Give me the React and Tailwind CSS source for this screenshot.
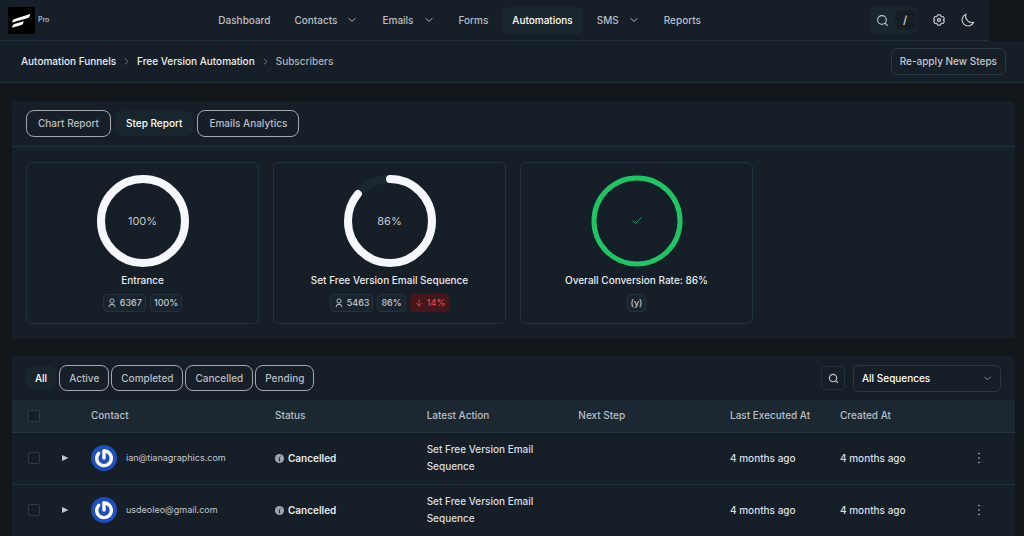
import React, { useState } from 'react';
import { ChevronDown, ChevronRight, Search, Check, ArrowDown } from 'lucide-react';
import { RiUserLine } from 'react-icons/ri';

const navItems = [
  { label: 'Dashboard' },
  { label: 'Contacts', menu: true },
  { label: 'Emails', menu: true },
  { label: 'Forms' },
  { label: 'Automations', active: true },
  { label: 'SMS', menu: true },
  { label: 'Reports' }
];

const subscribers = [
  { email: 'ian@tianagraphics.com', status: 'Cancelled', action: 'Set Free Version Email Sequence', executed: '4 months ago', created: '4 months ago' },
  { email: 'usdeoleo@gmail.com', status: 'Cancelled', action: 'Set Free Version Email Sequence', executed: '4 months ago', created: '4 months ago' }
];

const Logo = () => (
  <svg className="h-[27px] w-[27px]" viewBox="0 0 27 27">
    <rect width="27" height="27" rx="2" fill="#000" />
    <path d="M4.200 15.600c0-2.300 1-3.300 3-3.900L22.200 7c0 2.400-1 3.600-3.100 4.200L4.200 15.600z" fill="#fff" />
    <path d="M4.200 20.700c0-2.300 1-3.300 3-3.900l8.400-2.600c0 2.300-1 3.400-3 4l-8.400 2.500z" fill="#fff" />
  </svg>
);

const GearIcon = () => (
  <svg className="h-3 w-3" viewBox="0 0 24 24" fill="none" stroke="currentColor" strokeWidth="2.200" strokeLinejoin="round">
    <path d="M9 1.800h6l1.500 3.600 3.800-.5 2.500 4.800L20.500 12l2.300 2.300-2.500 4.800-3.800-.5-1.500 3.600H9l-1.500-3.600-3.800.5-2.500-4.800L3.500 12 1.200 9.700l2.500-4.800 3.800.5z" />
    <circle cx="12" cy="12" r="3" strokeWidth="2.600" />
  </svg>
);

const MoonIcon = () => (
  <svg className="h-[14px] w-[14px]" viewBox="0 0 24 24" fill="none" stroke="currentColor" strokeWidth="2" strokeLinejoin="round">
    <path d="M8.500 2A10.500 10.500 0 1 0 22 16 A11 11 0 0 1 8.500 2z" />
  </svg>
);

const Avatar = () => (
  <svg className="h-[26px] w-[26px] shrink-0" viewBox="0 0 26 26">
    <circle cx="13" cy="13" r="13" fill="#1f4fbd" />
    <path d="M13 6a7.300 7.300 0 1 1-5.300 2.300" fill="none" stroke="#fff" strokeWidth="3.400" strokeLinecap="round" />
    <path d="M13 6v7" stroke="#fff" strokeWidth="3.400" strokeLinecap="round" />
  </svg>
);

const InfoIcon = () => (
  <svg className="h-[9px] w-[9px]" viewBox="0 0 18 18">
    <circle cx="9" cy="9" r="9" fill="#a3a8b0" />
    <path d="M10.600 3.500l-.4 1.800M7.200 8h2.300l-1.300 5.700h2.300" fill="none" stroke="#161e27" strokeWidth="2" />
  </svg>
);

const Ring = ({ percent, width, color, radius, children }) => {
  const length = 2 * Math.PI * radius;
  return (
    <div className="relative h-[94px] w-[94px]">
      <svg className="h-full w-full -rotate-90" viewBox="0 0 94 94" fill="none" strokeWidth={width}>
        <circle cx="47" cy="47" r={radius} stroke="#1c2831" />
        <circle cx="47" cy="47" r={radius} stroke={color} strokeLinecap="round" strokeDasharray={`${length * percent / 100} ${length}`} />
      </svg>
      <div className="absolute inset-0 flex items-center justify-center text-[11px] text-[#c3c8ce]">{children}</div>
    </div>
  );
};

const Tag = ({ danger, children }) => (
  <span className={`flex h-[18px] items-center gap-[3px] rounded border px-[3px] text-[9px] font-medium ${danger ? 'border-[#45161c] bg-[#45161c] text-[#e04a55]' : 'border-[#24323d] bg-[#1a242e] text-[#c3c8ce]'}`}>
    {children}
  </span>
);

const StepCard = ({ title, ring, children }) => (
  <div className="flex w-[233px] flex-col items-center rounded-md border border-[#233241] py-[11px]">
    {ring}
    <h3 className="mt-[2px] leading-5 font-medium text-[#e8eaed]">{title}</h3>
    <div className="mt-1 flex gap-1">{children}</div>
  </div>
);

const Tabs = ({ items, active, onChange, className, tabClass }) => (
  <div className={`flex ${className}`}>
    {items.map(item => (
      <button
        key={item}
        onClick={() => onChange(item)}
        className={`rounded-lg border font-medium ${tabClass} ${item === active ? 'border-[#161e27] bg-[#1a262e] text-white' : 'border-[#a3a8b0] text-[#b9bec5]'}`}
      >
        {item}
      </button>
    ))}
  </div>
);

const Checkbox = ({ label }) => (
  <input type="checkbox" aria-label={label} className="block h-3 w-3 appearance-none rounded-xs border border-[#2c3a46] bg-[#151d25] checked:bg-blue-600" />
);

const App = () => {
  const [report, setReport] = useState('Step Report');
  const [status, setStatus] = useState('All');

  return (
    <div className="min-h-screen bg-[#12171c] font-['Inter',sans-serif] text-[10px] text-[#c3c8ce]">
      <header className="mr-[35px] flex h-[41px] items-center justify-between border-b border-[#213040] bg-[#161e27] pr-[14px] pl-2">
        <a href="#home" className="flex items-center gap-[3px] text-[7px] font-medium">
          <Logo />
          Pro
        </a>
        <nav className="flex gap-1 font-medium">
          {navItems.map(item => (
            <a
              key={item.label}
              href={`#${item.label.toLowerCase()}`}
              className={`flex h-[27px] items-center gap-[9px] rounded-md px-[10px] ${item.active ? 'bg-[#1a262e] text-white' : 'text-[#b9bec5]'}`}
            >
              {item.label}
              {item.menu && <ChevronDown size={12} strokeWidth={2} />}
            </a>
          ))}
        </nav>
        <div className="flex items-center gap-4">
          <button aria-label="Search" className="flex h-[26px] items-center gap-[6px] rounded bg-[#1a262e] pr-[2px] pl-[6px]">
            <Search size={13} strokeWidth={2} />
            <kbd className="flex h-[20px] w-[20px] items-center justify-center rounded bg-[#151d25] font-['Inter',sans-serif] text-[11px] font-semibold">/</kbd>
          </button>
          <button aria-label="Settings"><GearIcon /></button>
          <button aria-label="Dark mode"><MoonIcon /></button>
        </div>
      </header>

      <div className="flex h-[42px] items-center justify-between border-b border-[#1f3039] bg-[#161e27] pr-[18px] pl-[21px] font-medium">
        <nav aria-label="Breadcrumb" className="flex items-center gap-[5px]">
          <a href="#funnels" className="text-[#eceef0]">Automation Funnels</a>
          <ChevronRight size={11} className="text-[#7d858e]" />
          <a href="#funnel" className="text-[#eceef0]">Free Version Automation</a>
          <ChevronRight size={11} className="text-[#7d858e]" />
          <span className="text-[#b0b5bc]">Subscribers</span>
        </nav>
        <button className="h-[27px] rounded-md border border-[#2a3843] px-2">Re-apply New Steps</button>
      </div>

      <main className="flex flex-col gap-[18px] pt-[18px] pr-[9px] pl-3">
        <section className="rounded-t bg-[#161e27]">
          <div className="flex h-[46px] items-center border-b border-[#213040] px-[14px]">
            <Tabs items={['Chart Report', 'Step Report', 'Emails Analytics']} active={report} onChange={setReport} className="gap-[3px]" tabClass="h-[27px] px-[11px]" />
          </div>
          <div className="flex flex-wrap gap-[14px] px-[14px] pt-[15px] pb-[14px]">
            <StepCard title="Entrance" ring={<Ring percent={100} width={8} radius={42} color="#f6f7fd">100%</Ring>}>
              <Tag><RiUserLine size={10} />6367</Tag>
              <Tag>100%</Tag>
            </StepCard>
            <StepCard title="Set Free Version Email Sequence" ring={<Ring percent={86} width={8} radius={42} color="#f6f7fd">86%</Ring>}>
              <Tag><RiUserLine size={10} />5463</Tag>
              <Tag>86%</Tag>
              <Tag danger><ArrowDown size={10} />14%</Tag>
            </StepCard>
            <StepCard title="Overall Conversion Rate: 86%" ring={<Ring percent={100} width={5} radius={43} color="#1fc465"><Check size={12} className="text-[#27a56a]" /></Ring>}>
              <Tag>(y)</Tag>
            </StepCard>
          </div>
        </section>

        <section className="rounded-t bg-[#161e27]">
          <div className="flex h-[44px] items-center justify-between pr-[14px] pl-[13px]">
            <Tabs items={['All', 'Active', 'Completed', 'Cancelled', 'Pending']} active={status} onChange={setStatus} className="gap-[2px]" tabClass="h-[26px] px-[9px]" />
            <div className="flex items-center gap-2">
              <button aria-label="Search subscribers" className="flex h-6 w-6 items-center justify-center rounded border border-[#24323d]">
                <Search size={11} strokeWidth={2.400} />
              </button>
              <div className="relative">
                <select aria-label="Sequence" className="h-[27px] w-[148px] appearance-none rounded-md border border-[#2a3843] bg-[#161e27] px-2 font-medium text-white">
                  <option>All Sequences</option>
                </select>
                <ChevronDown size={11} className="pointer-events-none absolute top-2 right-2 text-[#8b929a]" />
              </div>
            </div>
          </div>
          <table className="w-full table-fixed text-left">
            <thead className="bg-[#1c2831] font-medium text-[#b9bec5]">
              <tr className="h-8 border-b border-[#26353f]">
                <th className="w-10 pl-4"><Checkbox label="Select all" /></th>
                <th className="w-[31px]"></th>
                <th className="w-[184px] px-2 font-medium">Contact</th>
                <th className="px-2 font-medium">Status</th>
                <th className="px-2 font-medium">Latest Action</th>
                <th className="px-2 font-medium">Next Step</th>
                <th className="w-[110px] px-2 font-medium">Last Executed At</th>
                <th className="w-[110px] px-2 font-medium">Created At</th>
                <th className="w-[73px]"></th>
              </tr>
            </thead>
            <tbody className="font-medium text-[#dcdfe3]">
              {subscribers.map(s => (
                <tr key={s.email} className="h-[52px] border-b border-[#213040]">
                  <td className="pl-4"><Checkbox label={`Select ${s.email}`} /></td>
                  <td className="pl-[9px]">
                    <button aria-label="Expand" className="block">
                      <svg className="h-2 w-2" viewBox="0 0 8 8" fill="#c3c8ce"><path d="M1 1l6.500 3L1 7z" /></svg>
                    </button>
                  </td>
                  <td className="px-2">
                    <div className="flex items-center gap-[9px] text-[9px] font-normal text-[#c3c8ce]">
                      <Avatar />
                      {s.email}
                    </div>
                  </td>
                  <td className="px-2">
                    <div className="flex items-center gap-1 font-semibold text-[#e8eaed]">
                      <InfoIcon />
                      {s.status}
                    </div>
                  </td>
                  <td className="px-2 leading-[17px]">{s.action}</td>
                  <td className="px-2"></td>
                  <td className="px-2">{s.executed}</td>
                  <td className="px-2">{s.created}</td>
                  <td>
                    <button aria-label="More actions" className="mx-auto block">
                      <svg className="h-3 w-3" viewBox="0 0 12 12" fill="#c3c8ce">
                        <circle cx="6" cy="1.500" r=".8" />
                        <circle cx="6" cy="6" r=".8" />
                        <circle cx="6" cy="10.500" r=".8" />
                      </svg>
                    </button>
                  </td>
                </tr>
              ))}
            </tbody>
          </table>
        </section>
      </main>
    </div>
  );
};

export default App;
